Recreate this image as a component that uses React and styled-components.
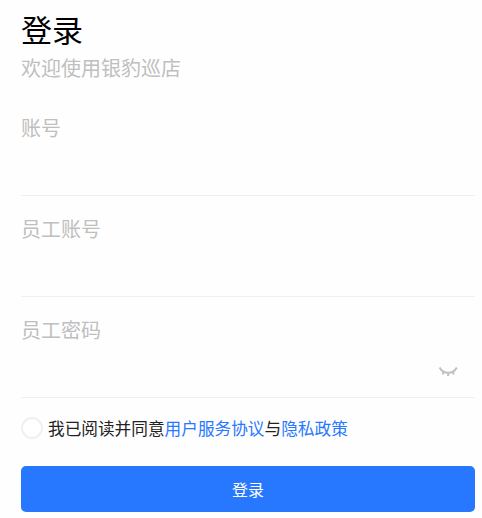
import React, { useState } from 'react';
import styled, { createGlobalStyle } from 'styled-components';

const fields = [
  { name: 'account', label: '账号', type: 'text' },
  { name: 'staff', label: '员工账号', type: 'text' },
  { name: 'password', label: '员工密码', type: 'password' },
];

const App = () => {
  const [values, setValues] = useState({ account: '', staff: '', password: '' });
  const [showPassword, setShowPassword] = useState(false);
  const [agreed, setAgreed] = useState(false);

  const handleChange = (e) => {
    setValues({ ...values, [e.target.name]: e.target.value });
  };

  return (
    <>
      <GlobalStyle />
      <Container onSubmit={(e) => e.preventDefault()}>
        <Title>登录</Title>
        <Subtitle>欢迎使用银豹巡店</Subtitle>

        {fields.map((field) => (
          <Field key={field.name}>
            <Label htmlFor={field.name}>{field.label}</Label>
            <InputRow>
              <Input
                id={field.name}
                name={field.name}
                type={field.type === 'password' && showPassword ? 'text' : field.type}
                value={values[field.name]}
                onChange={handleChange}
              />
              {field.type === 'password' && (
                <EyeButton type="button" onClick={() => setShowPassword(!showPassword)}>
                  <svg width="20" height="12" viewBox="0 0 20 12" fill="none" stroke="#c0c0c0" strokeWidth="2">
                    <path d="M1.6 1.5C3.4 4.9 6.4 6.7 10.2 6.7S17 4.9 18.8 1.5M5.6 5.4L4.6 8.4M10.2 6.7V10M14.8 5.4L15.8 8.4" />
                  </svg>
                </EyeButton>
              )}
            </InputRow>
          </Field>
        ))}

        <Agreement>
          <Radio type="button" $checked={agreed} onClick={() => setAgreed(!agreed)} />
          <span>
            我已阅读并同意<Link>用户服务协议</Link>与<Link>隐私政策</Link>
          </span>
        </Agreement>

        <SubmitButton type="submit">登录</SubmitButton>
      </Container>
    </>
  );
};

export default App;

// Styled Components
const GlobalStyle = createGlobalStyle`
  * {
    box-sizing: border-box;
  }

  body {
    margin: 0;
    background: #fefefe;
    font-family: 'Noto Sans CJK SC', sans-serif;
  }
`;

const Container = styled.form`
  height: 518px;
  padding: 7px 7px 0 21px;
  overflow: hidden;
`;

const Title = styled.h1`
  margin: 0;
  height: 45px;
  line-height: 44px;
  font-size: 31px;
  font-weight: 400;
  color: #000;
`;

const Subtitle = styled.p`
  margin: 0 0 10.6px;
  height: 32px;
  line-height: 32px;
  font-size: 20px;
  color: #bfbfbf;
`;

const Field = styled.div`
  height: 101.2px;
  padding-top: 17px;
  border-bottom: 1px solid #f0f0f0;
`;

const Label = styled.label`
  display: block;
  height: 32px;
  line-height: 32px;
  font-size: 20px;
  color: #bfbfbf;
`;

const InputRow = styled.div`
  display: flex;
  align-items: center;
  height: 51px;
  padding-right: 17px;
`;

const Input = styled.input`
  flex: 1;
  min-width: 0;
  height: 40px;
  padding: 0;
  border: none;
  outline: none;
  background: transparent;
  font: inherit;
  font-size: 18px;
`;

const EyeButton = styled.button`
  display: flex;
  padding: 2px 0 0;
  border: none;
  background: none;
  cursor: pointer;
`;

const Agreement = styled.div`
  display: flex;
  align-items: center;
  gap: 5px;
  height: 60px;
  margin-bottom: 8px;
  font-size: 16.66px;
  color: #222;
`;

const Radio = styled.button`
  width: 22px;
  height: 22px;
  padding: 0;
  border: 2px solid #f0f0f0;
  border-radius: 50%;
  background: ${(props) => (props.$checked ? '#2878ff' : '#fff')};
  cursor: pointer;
`;

const Link = styled.a`
  color: #2878ff;
  cursor: pointer;
`;

const SubmitButton = styled.button`
  display: block;
  width: 100%;
  height: 46px;
  padding: 0;
  border: none;
  border-radius: 5px;
  background: #2878ff;
  color: #fff;
  font-family: inherit;
  font-size: 16px;
  cursor: pointer;
`;
